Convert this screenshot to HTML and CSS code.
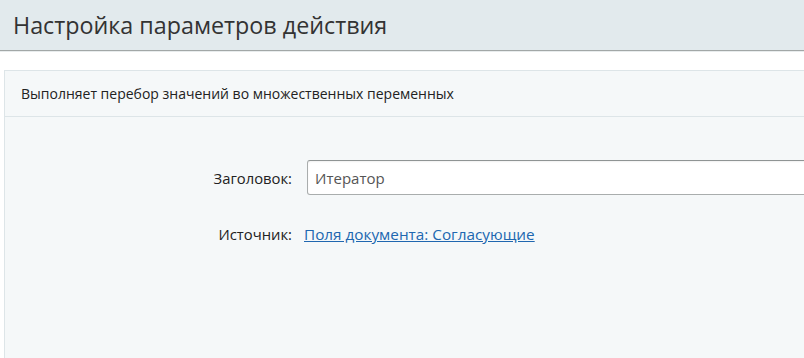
FILE: index.html
```html
<!DOCTYPE html>
<html lang="ru">
<head>
<meta charset="utf-8">
<link rel="stylesheet" href="styles.css">
</head>
<body>
<header class="header">
  <h1 class="title">Настройка параметров действия</h1>
</header>
<main class="panel">
  <div class="panel-desc">Выполняет перебор значений во множественных переменных</div>
  <div class="form">
    <div class="row">
      <label class="label" for="title">Заголовок:</label>
      <div class="value"><input id="title" class="input" type="text" value="Итератор"></div>
    </div>
    <div class="row">
      <span class="label">Источник:</span>
      <div class="value"><a class="link" href="#">Поля документа: Согласующие</a></div>
    </div>
  </div>
</main>
</body>
</html>
```
FILE: styles.css
```css
html, body {
  margin: 0;
  padding: 0;
  background: #ffffff;
  font-family: "Open Sans", "Noto Sans", sans-serif;
  color: #222;
  overflow: hidden;
  height: 358px;
}
.header {
  height: 50px;
  background: #e2eaed;
  border-bottom: 1px solid #a2a7a7;
  box-shadow: 0 1px 0 #e8eced;
  display: flex;
  align-items: center;
}
.title {
  margin: -1px 0 0 13px;
  font-weight: 400;
  font-size: 23.3px;
  color: #333;
}
.panel {
  margin: 19px 0 0 4px;
  border: 1px solid #dde5e8;
  border-right: none;
  border-bottom: none;
  background: #f5f8f9;
  height: 287px;
  overflow: hidden;
}
.panel-desc {
  height: 45px;
  display: flex;
  align-items: center;
  padding-left: 16px;
  font-size: 14px;
  color: #222;
  border-bottom: 1px solid #dde5e8;
}
.form {
  padding-top: 43px;
  display: flex;
  flex-direction: column;
  gap: 28px;
}
.row {
  display: flex;
  align-items: center;
}
.label {
  flex: 0 0 287px;
  text-align: right;
  font-size: 14.8px;
  color: #222;
}
.value {
  flex: 1;
  min-width: 0;
  margin-left: 12px;
}
.input {
  display: block;
  box-sizing: border-box;
  width: calc(100% + 10px);
  height: 35px;
  margin-left: 3px;
  border: 1px solid #a9adad;
  border-top-color: #8f9494;
  border-radius: 3px;
  padding: 0 7px;
  font-family: inherit;
  font-size: 15px;
  color: #555;
  background: #fff;
  box-shadow: inset 0 1px 2px rgba(0,0,0,0.06);
  outline: none;
}
.link {
  font-size: 15.3px;
  color: #2067b0;
  text-decoration: underline;
}
```
